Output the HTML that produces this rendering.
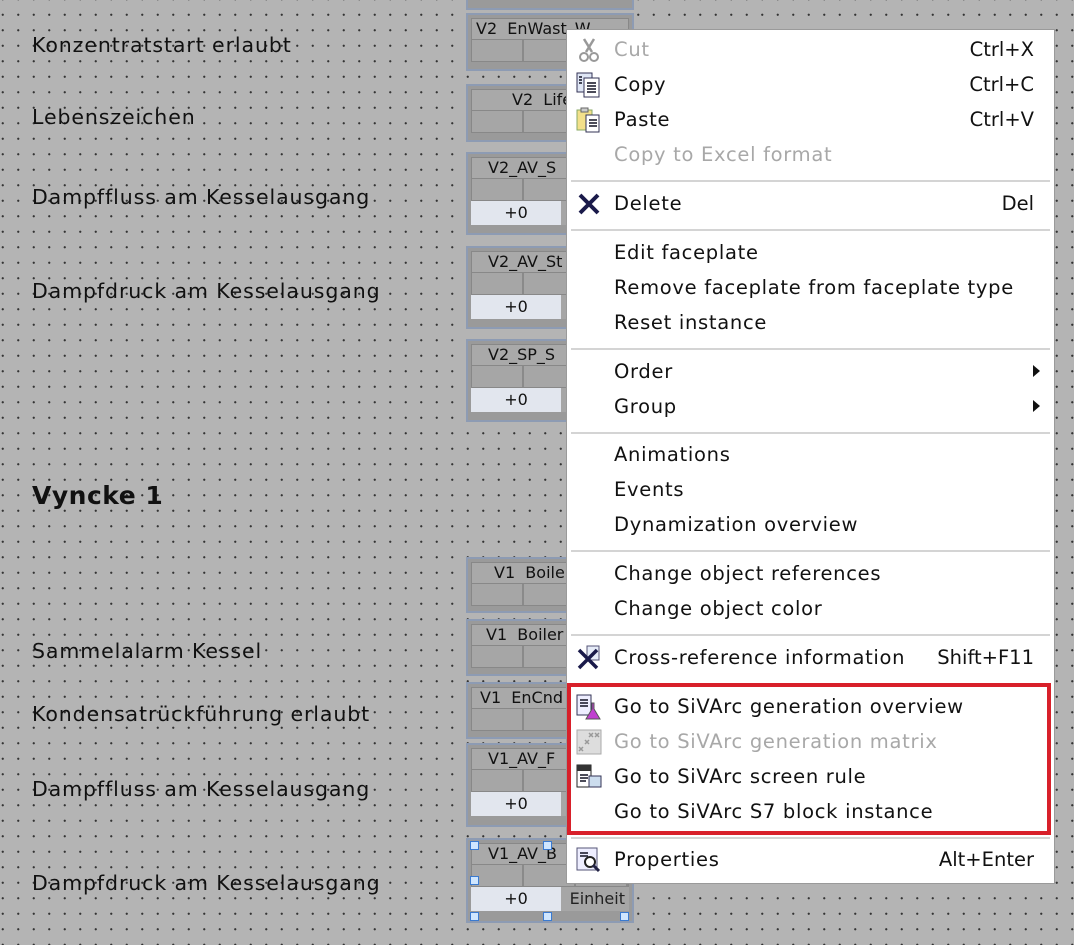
<!DOCTYPE html>
<html><head><meta charset="utf-8"><style>
*{margin:0;padding:0;box-sizing:border-box}
body{width:1074px;height:945px;overflow:hidden;position:relative;background-color:#b4b4b4;
background-image:radial-gradient(circle,#333 0.9px,transparent 1.3px);background-size:15.5px 15.5px;background-position:-5px 7px;
font-family:"DejaVu Sans","Liberation Sans",sans-serif;}
.lbl{position:absolute;left:32px;font-size:20.5px;color:#111;letter-spacing:0.9px;white-space:nowrap}
.fp{position:absolute;left:466px;width:168px;border:2px solid #8d9bb3;background:#9a9a9a;padding:3px}
.fp .t{height:22px;background:#a9a9a9;border:1px solid #888;font-size:16px;color:#111;padding-left:16px;line-height:20px;white-space:nowrap;overflow:hidden}
.fp .g{height:22px;display:flex;border:1px solid #888;border-top:none}
.fp .g div{flex:1;border-right:2px solid #8a8a8a;background:#a6a6a6}
.fp .v{height:24px;display:flex;font-size:16px;line-height:24px}
.fp .v .a{width:90px;background:#e2e6ee;text-align:center;color:#111}
.fp .v .b{flex:1;background:#a6a6a6;color:#222;text-align:right;padding-right:4px}
.menu{position:absolute;left:566px;top:29px;width:489px;height:855px;background:#fff;border:1px solid #9a9a9a}
.it{position:absolute;left:47px;font-size:19.5px;color:#111;white-space:nowrap;letter-spacing:0.7px}
.dis{color:#a8a8a8}
.sc{position:absolute;right:20px;font-size:19.5px;color:#111}
.sep{position:absolute;left:4px;right:4px;height:2px;background:#d4d4d4}
.ar{position:absolute;right:14px;width:0;height:0;border-top:6px solid transparent;border-bottom:6px solid transparent;border-left:7px solid #111}
.ic{position:absolute;left:8px;width:28px;height:28px}
.h{position:absolute;width:9px;height:9px;border:1px solid #3a7ad0;background:#cfe6ff}
</style></head><body>
<div class="lbl" style="top:33px">Konzentratstart erlaubt</div>
<div class="lbl" style="top:105px">Lebenszeichen</div>
<div class="lbl" style="top:185px">Dampffluss am Kesselausgang</div>
<div class="lbl" style="top:279px">Dampfdruck am Kesselausgang</div>
<div class="lbl" style="top:481px;font-weight:bold;font-size:25px;letter-spacing:0.5px">Vyncke 1</div>
<div class="lbl" style="top:639px">Sammelalarm Kessel</div>
<div class="lbl" style="top:702px">Kondensatrückführung erlaubt</div>
<div class="lbl" style="top:777px">Dampffluss am Kesselausgang</div>
<div class="lbl" style="top:871px">Dampfdruck am Kesselausgang</div>

<div class="fp" style="top:-20px;height:30px"></div>
<div class="fp" style="top:13px;height:58px"><div class="t" style="padding-left:4px">V2&nbsp; EnWast_W</div><div class="g"><div></div><div></div><div></div></div></div>
<div class="fp" style="top:84px;height:58px"><div class="t" style="padding-left:40px">V2&nbsp; Life</div><div class="g"><div></div><div></div><div></div></div></div>
<div class="fp" style="top:152px;height:83px"><div class="t">V2_AV_S</div><div class="g"><div></div><div></div><div></div></div><div class="v"><div class="a">+0</div><div class="b"></div></div></div>
<div class="fp" style="top:246px;height:83px"><div class="t">V2_AV_St</div><div class="g"><div></div><div></div><div></div></div><div class="v"><div class="a">+0</div><div class="b"></div></div></div>
<div class="fp" style="top:339px;height:83px"><div class="t">V2_SP_S</div><div class="g"><div></div><div></div><div></div></div><div class="v"><div class="a">+0</div><div class="b"></div></div></div>
<div class="fp" style="top:557px;height:56px"><div class="t" style="padding-left:22px">V1&nbsp; Boile</div><div class="g"><div></div><div></div><div></div></div></div>
<div class="fp" style="top:619px;height:57px"><div class="t" style="padding-left:14px">V1&nbsp; Boiler</div><div class="g"><div></div><div></div><div></div></div></div>
<div class="fp" style="top:682px;height:57px"><div class="t" style="padding-left:8px">V1&nbsp; EnCnd</div><div class="g"><div></div><div></div><div></div></div></div>
<div class="fp" style="top:743px;height:84px"><div class="t">V1_AV_F</div><div class="g"><div></div><div></div><div></div></div><div class="v"><div class="a">+0</div><div class="b"></div></div></div>
<div class="fp" style="top:838px;height:85px"><div class="t">V1_AV_B</div><div class="g"><div></div><div></div><div></div></div><div class="v"><div class="a">+0</div><div class="b">Einheit</div></div></div>
<div class="h" style="left:470px;top:841px"></div><div class="h" style="left:543px;top:841px"></div>
<div class="h" style="left:470px;top:876px"></div><div class="h" style="left:470px;top:912px"></div>
<div class="h" style="left:543px;top:912px"></div><div class="h" style="left:620px;top:912px"></div>

<div class="menu">
<svg class="ic" style="top:6px" viewBox="0 0 28 28"><path d="M9 3 L17 16 M19 3 L11 16" stroke="#999" stroke-width="2.5" fill="none"/><circle cx="9" cy="21" r="4" stroke="#999" stroke-width="2" fill="none"/><circle cx="19" cy="21" r="4" stroke="#999" stroke-width="2" fill="none"/></svg>
<div class="it dis" style="top:8px">Cut</div><div class="sc dis" style="top:8px">Ctrl+X</div>
<svg class="ic" style="top:41px" viewBox="0 0 28 28"><rect x="2" y="2" width="15" height="19" fill="#dfe6f5" stroke="#335" /><rect x="9" y="7" width="15" height="19" fill="#fff" stroke="#335"/><path d="M12 12h9M12 15h9M12 18h9M12 21h9M4 6h3M4 9h3M4 12h3" stroke="#112" stroke-width="1.6"/></svg>
<div class="it" style="top:43px">Copy</div><div class="sc" style="top:43px">Ctrl+C</div>
<svg class="ic" style="top:76px" viewBox="0 0 28 28"><rect x="2" y="4" width="15" height="20" fill="#f3e08a" stroke="#8a6" /><rect x="6" y="2" width="7" height="4" fill="#ccc" stroke="#666"/><rect x="11" y="9" width="13" height="17" fill="#fff" stroke="#335"/><path d="M14 14h8M14 17h8M14 20h8" stroke="#112" stroke-width="1.6"/></svg>
<div class="it" style="top:78px">Paste</div><div class="sc" style="top:78px">Ctrl+V</div>
<div class="it dis" style="top:113px">Copy to Excel format</div>
<div class="sep" style="top:150px"></div>
<svg class="ic" style="top:160px" viewBox="0 0 28 28"><path d="M5 5 L23 23 M23 5 L5 23" stroke="#1a1a4a" stroke-width="4"/></svg>
<div class="it" style="top:162px">Delete</div><div class="sc" style="top:162px">Del</div>
<div class="sep" style="top:199px"></div>
<div class="it" style="top:211px">Edit faceplate</div>
<div class="it" style="top:246px">Remove faceplate from faceplate type</div>
<div class="it" style="top:281px">Reset instance</div>
<div class="sep" style="top:318px"></div>
<div class="it" style="top:330px">Order</div><div class="ar" style="top:335px"></div>
<div class="it" style="top:365px">Group</div><div class="ar" style="top:370px"></div>
<div class="sep" style="top:402px"></div>
<div class="it" style="top:413px">Animations</div>
<div class="it" style="top:448px">Events</div>
<div class="it" style="top:483px">Dynamization overview</div>
<div class="sep" style="top:520px"></div>
<div class="it" style="top:532px">Change object references</div>
<div class="it" style="top:567px">Change object color</div>
<div class="sep" style="top:604px"></div>
<svg class="ic" style="top:614px" viewBox="0 0 28 28"><rect x="12" y="2" width="12" height="14" fill="#e6ecf8" stroke="#557"/><path d="M4 6 L22 24 M22 6 L4 24" stroke="#1a1a4a" stroke-width="3.5"/></svg>
<div class="it" style="top:616px">Cross-reference information</div><div class="sc" style="top:616px">Shift+F11</div>
<div style="position:absolute;left:0;top:653px;width:484px;height:152px;border:4px solid #d8202a"></div>
<svg class="ic" style="top:663px" viewBox="0 0 28 28"><rect x="2" y="2" width="14" height="20" fill="#eef" stroke="#335"/><path d="M5 7h8M5 10h8M5 13h8" stroke="#112" stroke-width="1.5"/><path d="M17 10 v6 l-6 10 h14 l-6 -10 v-6z" fill="#c040d0" stroke="#555"/></svg>
<div class="it" style="top:665px">Go to SiVArc generation overview</div>
<svg class="ic" style="top:698px" viewBox="0 0 28 28"><rect x="2" y="2" width="24" height="24" fill="#ddd" stroke="#aaa"/><path d="M14 5l4 4M18 5l-4 4M20 5l4 4M24 5l-4 4M10 12l4 4M14 12l-4 4M4 19l4 4M8 19l-4 4" stroke="#999" stroke-width="1.5"/></svg>
<div class="it dis" style="top:700px">Go to SiVArc generation matrix</div>
<svg class="ic" style="top:733px" viewBox="0 0 28 28"><rect x="2" y="2" width="14" height="22" fill="#fff" stroke="#222"/><rect x="2" y="2" width="14" height="6" fill="#333"/><path d="M5 12h8M5 15h8M5 18h6" stroke="#112" stroke-width="1.5"/><rect x="14" y="13" width="12" height="11" fill="#cde" stroke="#335"/></svg>
<div class="it" style="top:735px">Go to SiVArc screen rule</div>
<div class="it" style="top:770px">Go to SiVArc S7 block instance</div>
<div class="sep" style="top:807px"></div>
<svg class="ic" style="top:816px" viewBox="0 0 28 28"><rect x="2" y="2" width="20" height="22" fill="#eef" stroke="#557"/><path d="M5 7h8M5 10h8" stroke="#112" stroke-width="1.5"/><circle cx="15" cy="16" r="5" fill="#fff" stroke="#222" stroke-width="2"/><path d="M18 19l6 6" stroke="#224" stroke-width="3"/></svg>
<div class="it" style="top:818px">Properties</div><div class="sc" style="top:818px">Alt+Enter</div>
</div>
</body></html>
